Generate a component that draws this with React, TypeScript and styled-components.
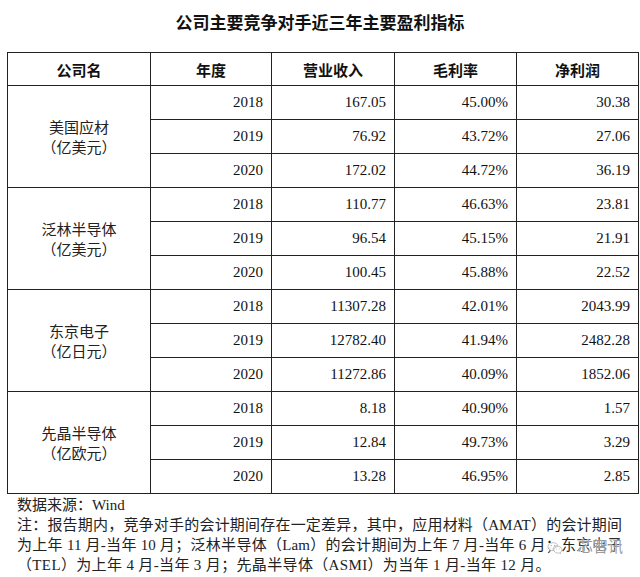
import { ReactElement } from 'react';
import styled, { createGlobalStyle } from 'styled-components';

const GlobalStyle = createGlobalStyle`
    body {
        margin: 0;
        background: #ffffff;
    }
`;

const SERIF = `"Liberation Serif", "Noto Sans CJK SC", serif`;
const CJK = `"Noto Sans CJK SC", sans-serif`;

type Group = {
    name: string;
    unit: string;
    rows: [string, string, string, string][];
};

const groups: Group[] = [
    {
        name: '美国应材',
        unit: '（亿美元）',
        rows: [
            ['2018', '167.05', '45.00%', '30.38'],
            ['2019', '76.92', '43.72%', '27.06'],
            ['2020', '172.02', '44.72%', '36.19'],
        ],
    },
    {
        name: '泛林半导体',
        unit: '（亿美元）',
        rows: [
            ['2018', '110.77', '46.63%', '23.81'],
            ['2019', '96.54', '45.15%', '21.91'],
            ['2020', '100.45', '45.88%', '22.52'],
        ],
    },
    {
        name: '东京电子',
        unit: '（亿日元）',
        rows: [
            ['2018', '11307.28', '42.01%', '2043.99'],
            ['2019', '12782.40', '41.94%', '2482.28'],
            ['2020', '11272.86', '40.09%', '1852.06'],
        ],
    },
    {
        name: '先晶半导体',
        unit: '（亿欧元）',
        rows: [
            ['2018', '8.18', '40.90%', '1.57'],
            ['2019', '12.84', '49.73%', '3.29'],
            ['2020', '13.28', '46.95%', '2.85'],
        ],
    },
];

const Page = styled.div`
    position: relative;
    width: 640px;
    height: 577px;
    overflow: hidden;
    color: #111;
`;

const Title = styled.div`
    height: 44px;
    line-height: 44px;
    text-align: center;
    font-family: ${CJK};
    font-size: 17px;
    font-weight: 700;
`;

const Table = styled.table`
    margin: 8px 0 0 7px;
    width: 626px;
    border-collapse: collapse;
    table-layout: fixed;
`;

const HeadCell = styled.th<{ w: number }>`
    width: ${({ w }) => w}px;
    height: 32px;
    padding: 0;
    border: 1px solid #222;
    font-family: ${CJK};
    font-size: 15px;
    font-weight: 700;
    text-align: center;
    vertical-align: middle;
`;

const NameCell = styled.td`
    padding: 0;
    border: 1px solid #222;
    font-family: ${CJK};
    font-size: 15px;
    line-height: 20px;
    text-align: center;
    vertical-align: middle;
    color: #222;
`;

const NumCell = styled.td`
    height: 33px;
    padding: 0 8px 0 0;
    border: 1px solid #222;
    font-family: ${SERIF};
    font-size: 15px;
    text-align: right;
    vertical-align: middle;
`;

const Notes = styled.div`
    padding: 1px 18px 0 17px;
    font-family: ${SERIF};
    font-size: 15px;
    line-height: 20px;
    color: #222;
`;

const NoteLine = styled.div<{ justify?: boolean; spread?: number }>`
    text-align: ${({ justify }) => (justify ? 'justify' : 'left')};
    text-align-last: ${({ justify }) => (justify ? 'justify' : 'left')};
    letter-spacing: ${({ spread }) => spread ?? 0}px;
    white-space: nowrap;
`;

const Watermark = styled.div`
    position: absolute;
    left: 547px;
    top: 534px;
    display: flex;
    align-items: center;
    font-family: ${CJK};
    font-size: 15px;
    line-height: 20px;
    color: rgba(110, 110, 110, 0.7);
    text-shadow: 0 0 1px #fff, 0 0 2px #fff;
    pointer-events: none;
`;

const WatermarkText = styled.span`
    margin-left: 15px;
    letter-spacing: 0;
`;

const WechatIcon = (): ReactElement => (
    <svg width='16' height='18' viewBox='0 0 24 26' style={{ marginTop: 6 }}>
        <path
            d='M9 3.5c-4.4 0-7.5 2.8-7.5 6.1 0 1.9 1 3.5 2.6 4.6l-.7 2.2 2.6-1.4c1 .3 1.9.4 3 .4h.4c-.2-.6-.3-1.1-.3-1.7 0-3.3 3.1-5.8 6.8-5.8h.4C15.8 5.5 12.7 3.5 9 3.5z'
            fill='rgba(255,255,255,0.9)'
            stroke='rgba(140,140,140,0.8)'
            strokeWidth='1'
        />
        <path
            d='M22.5 14.2c0-2.8-2.8-5-6.1-5s-6.1 2.2-6.1 5 2.8 5 6.1 5c.7 0 1.4-.1 2-.3l2 1.1-.5-1.8c1.6-.9 2.6-2.3 2.6-4z'
            fill='rgba(255,255,255,0.9)'
            stroke='rgba(140,140,140,0.8)'
            strokeWidth='1'
        />
        <circle cx='6.3' cy='8' r='0.9' fill='rgba(130,130,130,0.8)' />
        <circle cx='11.5' cy='8' r='0.9' fill='rgba(130,130,130,0.8)' />
        <circle cx='14.3' cy='13' r='0.7' fill='rgba(130,130,130,0.8)' />
        <circle cx='18.5' cy='13' r='0.7' fill='rgba(130,130,130,0.8)' />
    </svg>
);

const headers: [string, number][] = [
    ['公司名', 142],
    ['年度', 120],
    ['营业收入', 122],
    ['毛利率', 121],
    ['净利润', 121],
];

export default function App(): ReactElement {
    return (
        <Page>
            <GlobalStyle />
            <Title>公司主要竞争对手近三年主要盈利指标</Title>
            <Table>
                <thead>
                    <tr>
                        {headers.map(([label, w]) => (
                            <HeadCell key={label} w={w}>
                                {label}
                            </HeadCell>
                        ))}
                    </tr>
                </thead>
                <tbody>
                    {groups.map((g) =>
                        g.rows.map((r, i) => (
                            <tr key={g.name + r[0]}>
                                {i === 0 && (
                                    <NameCell rowSpan={3}>
                                        {g.name}
                                        <br />
                                        {g.unit}
                                    </NameCell>
                                )}
                                {r.map((v, j) => (
                                    <NumCell key={j}>{v}</NumCell>
                                ))}
                            </tr>
                        )),
                    )}
                </tbody>
            </Table>
            <Notes>
                <NoteLine>数据来源：Wind</NoteLine>
                <NoteLine justify>
                    注：报告期内，竞争对手的会计期间存在一定差异，其中，应用材料（AMAT）的会计期间
                </NoteLine>
                <NoteLine justify>
                    为上年 11 月-当年 10 月；泛林半导体（Lam）的会计期间为上年 7 月-当年 6 月；东京电子
                </NoteLine>
                <NoteLine spread={0.35}>
                    （TEL）为上年 4 月-当年 3 月；先晶半导体（ASMI）为当年 1 月-当年 12 月。
                </NoteLine>
            </Notes>
            <Watermark>
                <WechatIcon />
                <WatermarkText>芯智讯</WatermarkText>
            </Watermark>
        </Page>
    );
}
